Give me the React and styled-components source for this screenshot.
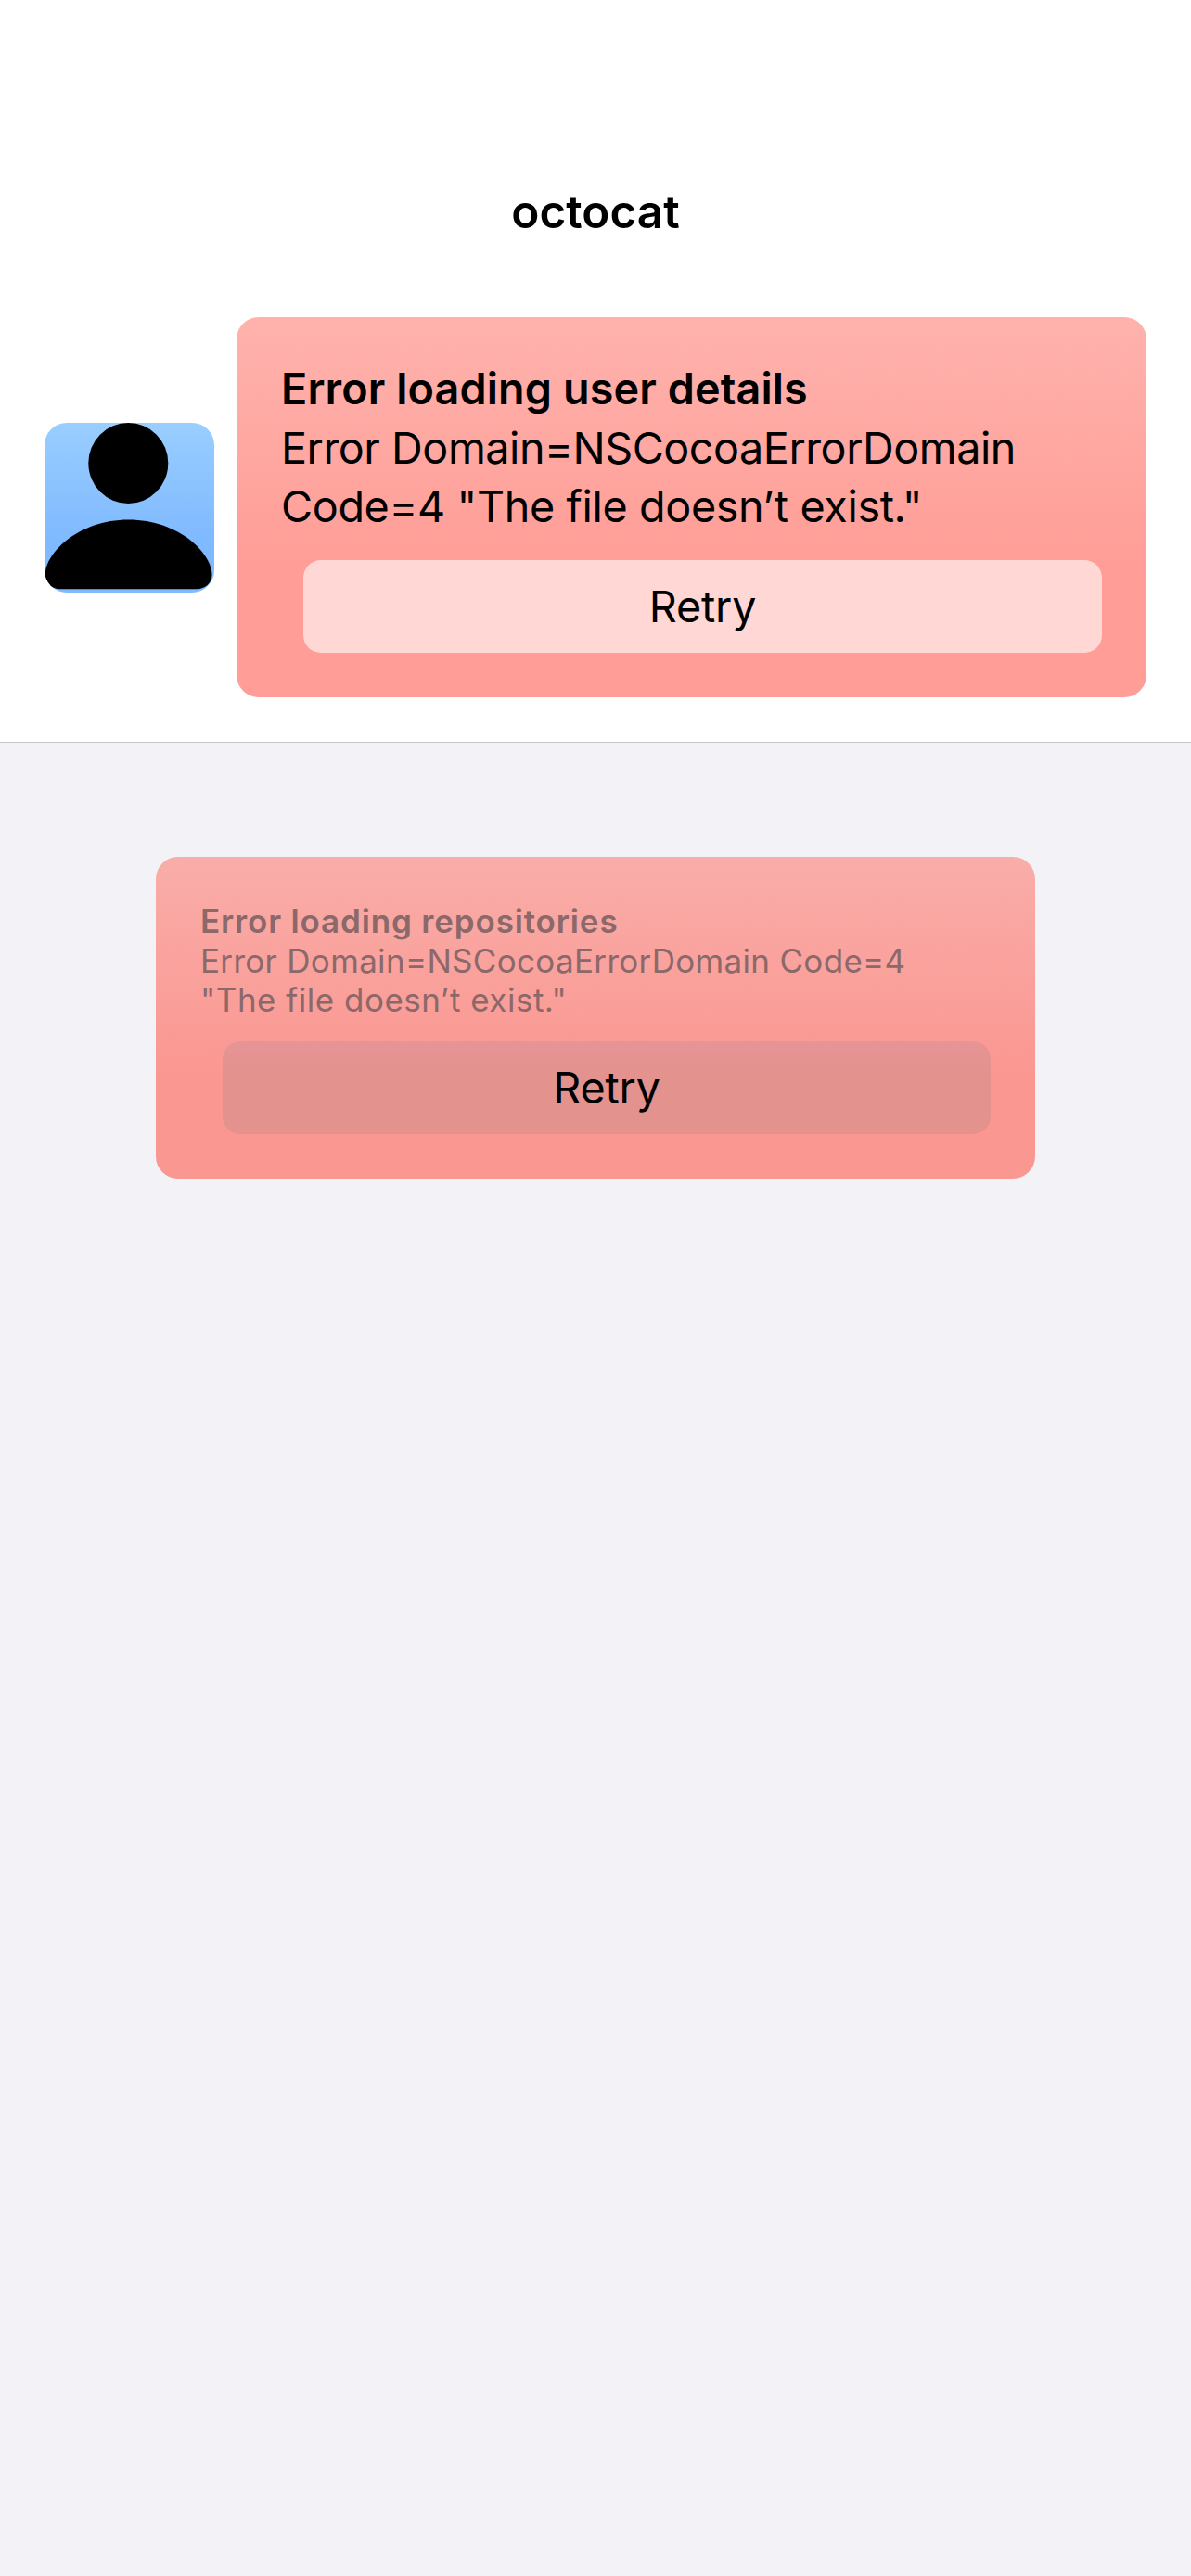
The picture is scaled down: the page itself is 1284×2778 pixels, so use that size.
import React from "react";
import styled, { createGlobalStyle, css } from "styled-components";

const GlobalStyle = createGlobalStyle`
  *, *::before, *::after { box-sizing: border-box; }
  html, body { margin: 0; background: #f2f2f7; }
  body { font-family: Inter, "Liberation Sans", sans-serif; color: #000; }
`;

const Screen = styled.div`
  display: flex;
  flex-direction: column;
  width: 1284px;
  height: 2778px;
  overflow: hidden;
  background: #f2f2f7;
`;

const Header = styled.header`
  display: flex;
  flex-direction: column;
  padding-top: 162px;
  background: #fff;
  border-bottom: 1px solid #c6c6c6;
`;

const NavBar = styled.div`
  display: flex;
  align-items: center;
  justify-content: center;
  height: 132px;
`;

const NavTitle = styled.h1`
  margin: 0;
  font-size: 49.5px;
  font-weight: 600;
  line-height: 60px;
`;

const UserDetails = styled.section`
  display: flex;
  align-items: center;
  gap: 24px;
  padding: 48px;
`;

const Avatar = styled.div`
  flex: none;
  width: 183px;
  height: 183px;
  overflow: hidden;
  border-radius: 24px;
  background: linear-gradient(#99ceff, #7fb9ff 70%);

  svg { display: block; }
`;

const Repositories = styled.main`
  display: flex;
  flex-direction: column;
  padding: 123px 168px 0;
`;

const Card = styled.article`
  display: flex;
  flex: 1;
  flex-direction: column;
  padding: 48px;
  border-radius: 24px;
  background: linear-gradient(#ffb2ad, #ff9d96 67%);

  ${({ $secondary }) => $secondary && css`
    background: linear-gradient(#f9ada9, #fb9791 67%);
    color: #8b686a;
  `}
`;

const CardTitle = styled.h2`
  margin: 0 0 4px;
  font-size: 46.7px;
  font-weight: 600;
  line-height: 58px;
  letter-spacing: 0.12px;

  ${({ $secondary }) => $secondary && css`
    margin-bottom: 1px;
    font-size: 35px;
    line-height: 42px;
    letter-spacing: 0.84px;
  `}
`;

const CardMessage = styled.p`
  display: flex;
  flex-direction: column;
  margin: 0 0 26px;
  font-size: 46.7px;
  line-height: 63px;

  ${({ $secondary }) => $secondary && css`
    margin-bottom: 24px;
    font-size: 35px;
    line-height: 42px;
  `}
`;

const MessageLine = styled.span`
  letter-spacing: ${({ $tracking }) => $tracking}px;
`;

const RetryButton = styled.button`
  height: 100px;
  margin: 0 0 0 24px;
  padding: 0;
  border: 0;
  border-radius: 19px;
  background: #ffd7d4;
  color: #000;
  font-family: inherit;
  font-size: 46.7px;
  line-height: 58px;
  letter-spacing: -0.16px;

  ${({ $secondary }) => $secondary && css`
    background: linear-gradient(#e69495, #e3928e 35%);
  `}
`;

function PersonIcon() {
  return (
    <svg width="183" height="183" viewBox="0 0 183 183" aria-hidden="true">
      <ellipse cx="90.3" cy="43.5" rx="43" ry="43.5" />
      <path d="M17 179.2C7 179.2 0.7 173 0.7 163.5C0.7 141 36 104.6 90.5 104.6C145 104.6 180.5 141 180.5 164C180.5 173 173 179.2 164 179.2Z" />
    </svg>
  );
}

function ErrorCard({ title, lines, secondary }) {
  return (
    <Card $secondary={secondary}>
      <CardTitle $secondary={secondary}>{title}</CardTitle>
      <CardMessage $secondary={secondary}>
        {lines.map(({ text, tracking }) => (
          <MessageLine key={text} $tracking={tracking}>{text}</MessageLine>
        ))}
      </CardMessage>
      <RetryButton type="button" $secondary={secondary}>Retry</RetryButton>
    </Card>
  );
}

const userErrorLines = [
  { text: "Error Domain=NSCocoaErrorDomain", tracking: -0.46 },
  { text: 'Code=4 "The file doesn’t exist."', tracking: -0.36 },
];

const repositoryErrorLines = [
  { text: "Error Domain=NSCocoaErrorDomain Code=4", tracking: 0.32 },
  { text: '"The file doesn’t exist."', tracking: 0.5 },
];

export default function App() {
  return (
    <Screen>
      <GlobalStyle />
      <Header>
        <NavBar>
          <NavTitle>octocat</NavTitle>
        </NavBar>
        <UserDetails>
          <Avatar>
            <PersonIcon />
          </Avatar>
          <ErrorCard title="Error loading user details" lines={userErrorLines} />
        </UserDetails>
      </Header>
      <Repositories>
        <ErrorCard secondary title="Error loading repositories" lines={repositoryErrorLines} />
      </Repositories>
    </Screen>
  );
}
